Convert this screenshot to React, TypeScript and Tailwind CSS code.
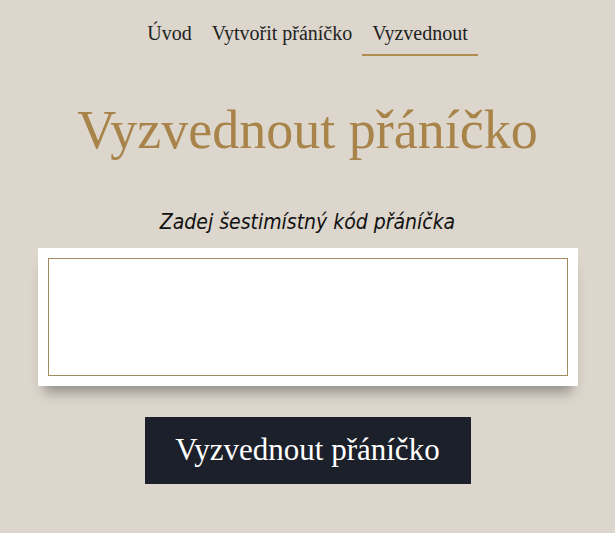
import React, { useState } from 'react';

const NAV_LINKS = [
  { label: 'Úvod', active: false },
  { label: 'Vytvořit přáníčko', active: false },
  { label: 'Vyzvednout', active: true },
];

const serif = "font-['Liberation_Serif','DejaVu_Serif',serif]";

export default function App(): React.JSX.Element {
  const [code, setCode] = useState('');

  return (
    <div className={`min-h-[533px] w-full bg-[#dcd6cc] ${serif}`}>
      <nav className="flex justify-center pt-[21px]">
        {NAV_LINKS.map((link) => (
          <a
            key={link.label}
            href="#"
            className={`border-b-2 px-[10px] pb-[9px] text-[20px] leading-6 text-[#222222] ${
              link.active ? 'border-[#b08d4f]' : 'border-transparent'
            }`}
          >
            {link.label}
          </a>
        ))}
      </nav>

      <h1 className="mt-[42px] text-center text-[54px] leading-[64px] text-[#a8844a]">
        Vyzvednout přáníčko
      </h1>

      <div className="mt-[46px] flex flex-col items-center">
        <label
          htmlFor="code"
          className="text-[21px] leading-7 italic text-[#111111] font-['DejaVu_Sans_Condensed','DejaVu_Sans',cursive]"
        >
          Zadej šestimístný kód přáníčka
        </label>

        <div className="mt-[12px] w-[540px] bg-white p-[10px] shadow-[0_12px_12px_-6px_rgba(0,0,0,0.35)]">
          <textarea
            id="code"
            value={code}
            onChange={(e) => setCode(e.target.value)}
            className="block h-[118px] w-full resize-none border border-[#a08c60] bg-white outline-none"
          />
        </div>

        <button className="mt-[31px] h-[67px] w-[326px] bg-[#1c202b] text-[31px] text-white">
          Vyzvednout přáníčko
        </button>
      </div>
    </div>
  );
}
